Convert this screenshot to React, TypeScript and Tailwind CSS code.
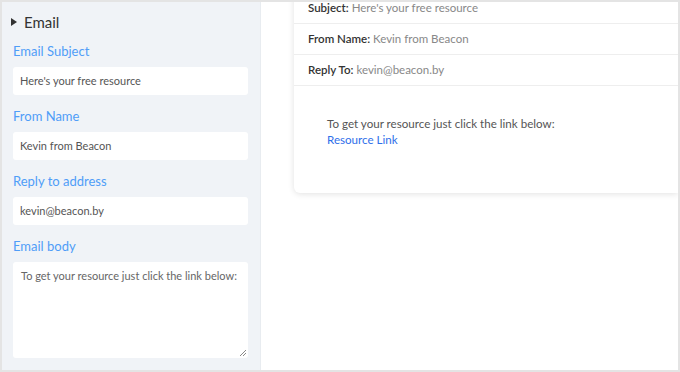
import React from 'react';

const font = { fontFamily: 'Lato, "Noto Sans", sans-serif' };

function Field({ label, value, first }: { label: string; value: string; first?: boolean }) {
  return (
    <div className={first ? 'mt-[10px]' : 'mt-[12px]'}>
      <div className="text-[13px] leading-[18px] text-[#4f9df8]">{label}</div>
      <div className="mt-[7px] h-[28px] rounded-[3px] bg-white px-[7px] text-[11px] leading-[28px] text-[#555]">{value}</div>
    </div>
  );
}

function Row({ label, value }: { label: string; value: string }) {
  return (
    <div className="flex h-[31px] items-center border-b border-[#eeeeee] pl-[14px] text-[11.5px] text-[#888]">
      <span className="font-semibold text-[#333]">{label}</span>&nbsp;{value}
    </div>
  );
}

export default function App() {
  return (
    <div className="h-[372px] w-[680px] overflow-hidden border-2 border-[#e4e4e4] bg-white" style={font}>
      <div className="flex h-full">
        <aside className="w-[259px] shrink-0 border-r border-[#e8ecf0] bg-[#f0f3f7] pl-[11px] pr-[12px]">
          <div className="flex items-center pt-[10px]">
            <svg width="6" height="8" viewBox="0 0 6 8" className="ml-[-2px]"><path d="M0 0L6 4L0 8Z" fill="#333" /></svg>
            <span className="ml-[7px] text-[15px] leading-[20px] text-[#333]">Email</span>
          </div>
          <Field first label="Email Subject" value="Here's your free resource" />
          <Field label="From Name" value="Kevin from Beacon" />
          <Field label="Reply to address" value="kevin@beacon.by" />
          <div className="mt-[12px]">
            <div className="text-[13px] leading-[18px] text-[#4f9df8]">Email body</div>
            <div className="relative mt-[7px] h-[96px] rounded-[3px] bg-white px-[8px] pt-[5px] text-[11px] leading-[18px] text-[#666]">
              To get your resource just click the link below:
              <svg width="8" height="8" viewBox="0 0 8 8" className="absolute bottom-[1px] right-[1px]">
                <path d="M7 1L1 7M7 4L4 7" stroke="#888" strokeWidth="1" />
              </svg>
            </div>
          </div>
        </aside>
        <main className="flex-1 pl-[33px]">
          <div className="-mt-[9px] rounded-bl-[6px] bg-white shadow-[0_1px_6px_rgba(0,0,0,0.12)]">
            <Row label="Subject:" value="Here's your free resource" />
            <Row label="From Name:" value="Kevin from Beacon" />
            <Row label="Reply To:" value="kevin@beacon.by" />
            <div className="h-[107px] pl-[33px] pt-[30px] text-[11.6px] leading-[16px] text-[#555]">
              <div>To get your resource just click the link below:</div>
              <div className="text-[#2f6fea]">Resource Link</div>
            </div>
          </div>
        </main>
      </div>
    </div>
  );
}
